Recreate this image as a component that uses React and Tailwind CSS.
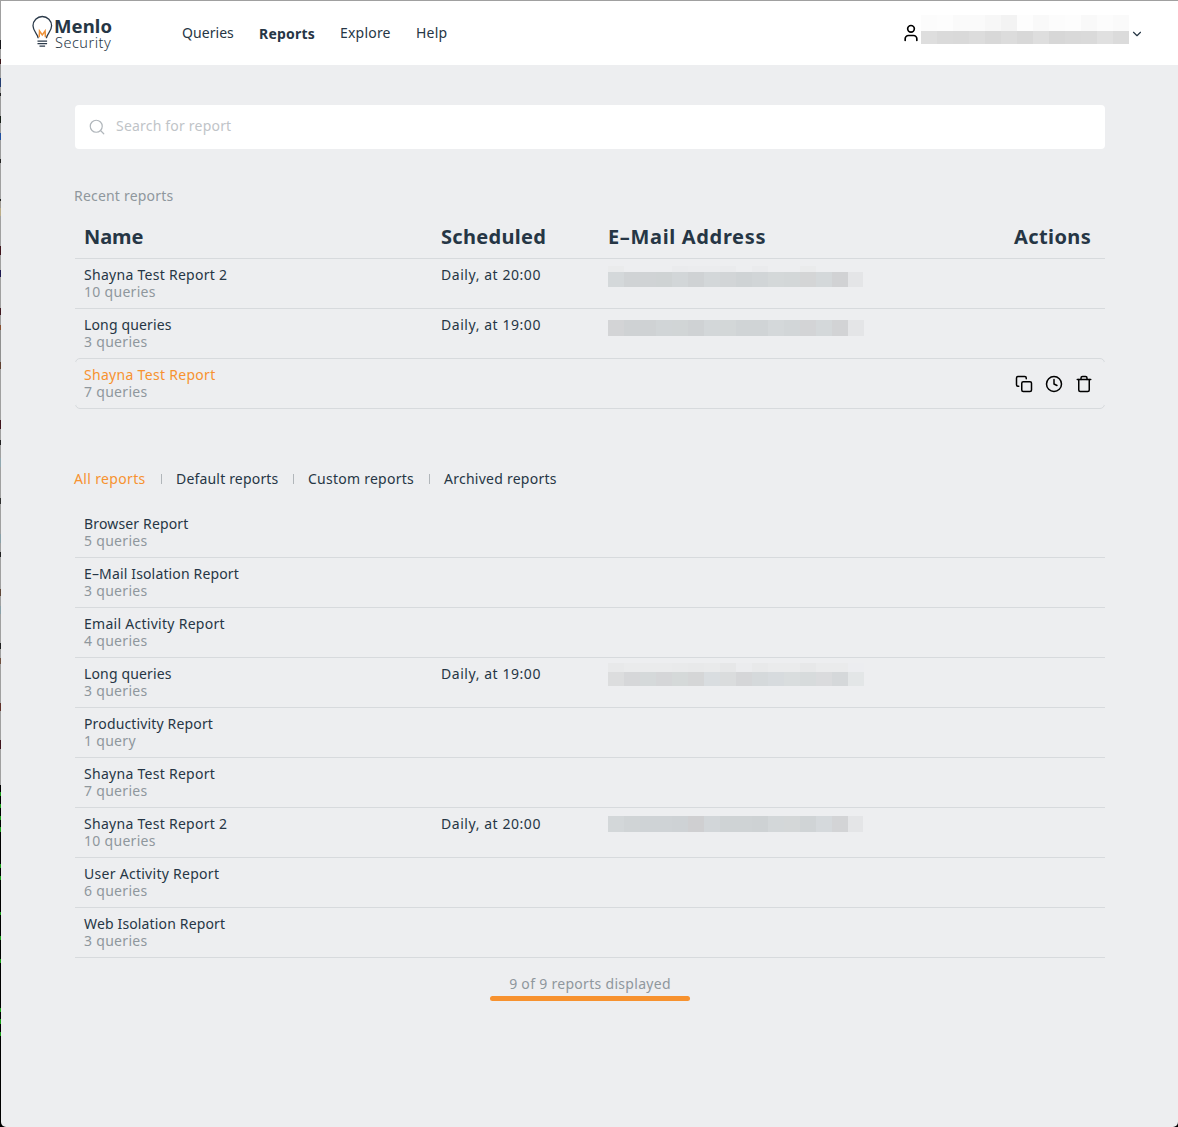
import { User, ChevronDown, Search } from "lucide-react";
import { FiCopy, FiClock, FiTrash } from "react-icons/fi";

const recent = [
  { name: "Shayna Test Report 2", count: "10 queries", time: "Daily, at 20:00", mask: "a", wide: true },
  { name: "Long queries", count: "3 queries", time: "Daily, at 19:00", mask: "b" },
];

const reports = [
  { name: "Browser Report", count: "5 queries" },
  { name: "E–Mail Isolation Report", count: "3 queries" },
  { name: "Email Activity Report", count: "4 queries", wide: true },
  { name: "Long queries", count: "3 queries", time: "Daily, at 19:00", mask: "c" },
  { name: "Productivity Report", count: "1 query" },
  { name: "Shayna Test Report", count: "7 queries", wide: true },
  { name: "Shayna Test Report 2", count: "10 queries", time: "Daily, at 20:00", mask: "d", wide: true },
  { name: "User Activity Report", count: "6 queries", wide: true },
  { name: "Web Isolation Report", count: "3 queries" },
];

const masks = {
  a: {
    pad: "w-[255px] pt-[7px]",
    top: "h-[6px]",
    body: "h-[15px]",
    light: ["#eaebec", "#edeef0", "#edeef0", "#edeef0", "#eaebed", "#ebecee", "#ebecee", "#eaebed", "#edeef0", "#eaebed", "#edeef0", "#edeef0", "#eaebec", "#edeef0", "#edeef0", "#edeef0"],
    dark: ["#d4d8da", "#d0d3d5", "#d0d3d5", "#cfd3d4", "#d2d6d8", "#cfd2d4", "#d3d7d9", "#d2d5d7", "#cfd3d5", "#d1d5d7", "#d4d8d9", "#d3d7d8", "#d4d5d6", "#d4d8da", "#d1d2d4", "#e4e5e7"],
  },
  b: {
    pad: "w-[256px] pt-[5px]",
    top: "h-[6px]",
    body: "h-4",
    light: [],
    dark: ["#d3d4d6", "#cfd2d4", "#cfd2d4", "#d1d5d7", "#d1d5d6", "#cfd2d4", "#d3d7d9", "#d3d7d8", "#d0d4d6", "#d0d4d6", "#d4d8da", "#d2d6d8", "#d3d4d6", "#d4d8da", "#d2d3d5", "#e4e5e7"],
  },
  c: {
    pad: "w-[256px] pt-[5px]",
    top: "h-[9px]",
    body: "h-[14px]",
    light: ["#e8e9ea", "#eaebec", "#eaebec", "#eaebec", "#e9eaeb", "#e8e9ea", "#e9eaeb", "#e6e7e8", "#ebecee", "#e8e9ea", "#eaebec", "#eaebec", "#e7e8e9", "#eaebec", "#eaebec", "#ecedf0"],
    dark: ["#dcddde", "#d6d7d9", "#d5d9da", "#d5d6d8", "#d5d9d9", "#d5d6d7", "#d9dde0", "#dadcdd", "#d5d6d8", "#d5d9db", "#d7dbde", "#d9ddde", "#d7dbdc", "#dadbdd", "#d5d8da", "#e3e6e7"],
  },
  d: {
    pad: "w-[255px] pt-[5px]",
    top: "h-[3px]",
    body: "h-4",
    light: [],
    dark: ["#d3d7d9", "#d0d4d6", "#cfd3d6", "#cfd3d6", "#ced2d5", "#cfcfd1", "#d2d6d9", "#cfd3d5", "#cfd3d5", "#ced2d4", "#d3d7d9", "#d4d7d8", "#d0d4d6", "#d5d9dc", "#d3d4d6", "#e4e5e7"],
  },
};

const accountLight = ["#fcfcfc", "#fdfdfd", "#fafafa", "#fafafa", "#f7f7f7", "#f3f3f3", "#fdfdfd", "#f9f9f9", "#fcfcfc", "#fdfdfd", "#f9f9f9", "#fcfcfc", "#fafafa"];
const accountDark = ["#dedede", "#dadada", "#d9d9d9", "#dcdcdc", "#d8d8d8", "#dcdcdc", "#d8d8d8", "#dedede", "#d7d7d7", "#d9d9d9", "#dadada", "#e0e0e0", "#dbdbdb"];

// [start, end, colour] bands of the window edge
const edge = [
  [0, 40, "#a0a0a0"], [40, 49, "#18181c"], [49, 59, "#a0a0a0"], [59, 64, "#3c1418"], [64, 78, "#9c9c9c"],
  [78, 87, "#223c70"], [87, 93, "#9c9c9c"], [93, 96, "#222222"], [96, 116, "#9c9c9c"], [116, 123, "#182018"],
  [123, 133, "#9c9c9c"], [133, 140, "#2050a0"], [140, 159, "#9c9c9c"], [159, 163, "#242424"], [163, 199, "#a0a0a0"],
  [199, 201, "#222222"], [201, 208, "#a09c94"], [208, 216, "#bcae88"], [216, 246, "#a0a0a0"], [246, 255, "#40141c"],
  [255, 270, "#a0a0a0"], [270, 277, "#1c1850"], [277, 308, "#a0a0a0"], [308, 315, "#401820"], [315, 325, "#a0a0a0"],
  [325, 330, "#885030"], [330, 362, "#909090"], [362, 369, "#604030"], [369, 420, "#a0a0a0"], [420, 429, "#40141c"],
  [429, 440, "#a0a0a0"], [440, 445, "#222222"], [445, 458, "#a0a0a0"], [458, 467, "#90a8b0"], [467, 498, "#a0a0a0"],
  [498, 504, "#303030"], [504, 534, "#a0a0a0"], [534, 543, "#88a0a8"], [543, 552, "#a0a0a0"], [552, 557, "#202020"],
  [557, 589, "#a0a0a0"], [589, 596, "#604838"], [596, 606, "#a0a0a0"], [606, 614, "#88a0a8"], [614, 643, "#a0a0a0"],
  [643, 649, "#202020"], [649, 658, "#a0a0a0"], [658, 664, "#705040"], [664, 703, "#a0a0a0"], [703, 711, "#603028"],
  [711, 740, "#a0a0a0"], [740, 749, "#40141c"], [749, 785, "#a0a0a0"], [785, 792, "#000000"], [792, 796, "#18a018"],
  [796, 804, "#000000"], [804, 808, "#18a018"], [808, 816, "#000000"], [816, 820, "#18a018"], [820, 827, "#000000"],
  [827, 832, "#18a018"], [832, 864, "#000000"], [864, 868, "#18a018"], [868, 876, "#000000"], [876, 880, "#18a018"],
  [880, 912, "#000000"], [912, 915, "#18a018"], [915, 936, "#000000"], [936, 940, "#18a018"], [940, 959, "#000000"],
  [959, 963, "#18a018"], [963, 1008, "#000000"], [1008, 1012, "#18a018"], [1012, 1019, "#000000"],
  [1019, 1024, "#18a018"], [1024, 1032, "#000000"], [1032, 1036, "#18a018"], [1036, 1127, "#000000"],
];

function Blocks({ colors, className }) {
  return (
    <div className={`flex overflow-hidden ${className}`}>
      {colors.map((c, i) => (
        <span key={i} className="h-full w-4 shrink-0" style={{ backgroundColor: c }} />
      ))}
    </div>
  );
}

function Mask({ kind }) {
  const m = masks[kind];
  return (
    <div className={m.pad}>
      <Blocks colors={m.light} className={m.top} />
      <Blocks colors={m.dark} className={m.body} />
    </div>
  );
}

function Row({ item, last }) {
  return (
    <div className={`grid h-[50px] grid-cols-[357px_167px_1fr] border-b pl-[9px] ${last ? "border-transparent" : "border-[#d7dadd]"}`}>
      <div className="pt-[7px]">
        <div className={item.wide ? "tracking-[0.28px]" : "tracking-[0.15px]"}>{item.name}</div>
        <Count>{item.count}</Count>
      </div>
      <div className="pt-[7px] tracking-[0.56px]">{item.time}</div>
      {item.mask && <Mask kind={item.mask} />}
    </div>
  );
}

function Count({ children }) {
  return <div className="text-[#8f979d]">{children}</div>;
}

function Logo() {
  return (
    <div className="flex w-[83px] shrink-0">
      <svg width="21" height="34" viewBox="0 0 21 34" fill="none" className="mt-[14px] shrink-0" stroke="#2c3b4b">
        <path d="M6.2 23.2C6 19.5 1 16.5 1 10.8a9.3 9.3 0 0 1 18.6 0C19.6 16.5 14.6 19.5 14.4 23.2" strokeWidth="1.3" />
        <path d="M5.500 26.200h9.600M5.500 28.700h9.600M7.500 31.200h5.600" strokeWidth="1.3" />
        <path d="M7.200 22.200l.3-6.200 2.800 3.900 2.800-3.900.3 6.200" stroke="#ee9138" strokeWidth="1.5" />
      </svg>
      <div className="ml-[1px] pt-[16px]">
        <div className="text-[18.5px] leading-[18px] font-bold tracking-[0.1px]">Menlo</div>
        <div className="pl-px text-[14.5px] leading-[15px] font-light tracking-[0.5px]">Security</div>
      </div>
    </div>
  );
}

function Divider() {
  return <span className="mt-[1px] h-[10px] w-px bg-[#b1b6ba]" />;
}

export default function App() {
  return (
    <div className="flex h-[1127px] w-[1178px] overflow-hidden bg-black font-['Noto_Sans',sans-serif] text-[14px] leading-[17px] tracking-[0.3px] whitespace-nowrap text-[#263645]">
      <div className="w-px shrink-0">
        {edge.map(([from, to, color]) => (
          <div key={from} style={{ height: to - from, backgroundColor: color }} />
        ))}
      </div>
      <div className="flex w-[1177px] flex-col overflow-hidden rounded-b-[5px] border-t border-[#a0a0a0] bg-[#edeef0]">
        <header className="flex h-[64px] shrink-0 bg-white pl-[31px]">
          <Logo />
          <nav className="flex pt-[23px] tracking-[0.2px]">
            <span className="ml-[67px] w-[77px] tracking-[0.05px]">Queries</span>
            <span className="w-[81px] pt-px font-bold">Reports</span>
            <span className="w-[76px]">Explore</span>
            <span>Help</span>
          </nav>
          <div className="mr-[34px] ml-auto flex">
            <User className="mt-[22px] text-black" size={20} strokeWidth={2} />
            <div className="mt-[14px] w-[208px]">
              <Blocks colors={accountLight} className="h-4" />
              <Blocks colors={accountDark} className="h-[13px]" />
            </div>
            <ChevronDown className="mt-[26px] ml-[1px]" size={14} strokeWidth={2} />
          </div>
        </header>

        <main className="mt-10 ml-[74px] w-[1030px]">
          <div className="flex h-11 items-center rounded-[4px] bg-white pl-[13px] text-[#bfc4c8]">
            <Search size={18} strokeWidth={1.6} className="text-[#b0b6bb]" />
            <span className="-mt-[3px] ml-[10px] tracking-[0.2px]">Search for report</span>
          </div>

          <div className="mt-[38px] -ml-px tracking-[0.2px] text-[#8f979d]">Recent reports</div>

          <div className="mt-[11px] grid h-[44px] grid-cols-[357px_167px_406px_1fr] border-b border-[#d7dadd] pt-[8px] pl-[9px] text-[20px] leading-[28px] font-bold">
            <span className="tracking-[-0.1px]">Name</span>
            <span>Scheduled</span>
            <span className="tracking-[0.66px]">E–Mail Address</span>
            <span className="tracking-[0.4px]">Actions</span>
          </div>
          {recent.map((r, i) => (
            <Row key={r.name} item={r} last={i === 1} />
          ))}
          <div className="relative -mt-px flex h-[51px] justify-between rounded-[5px] border border-[#d7dadd] pr-[11px] pl-[8px] before:absolute before:inset-y-[3px] before:-left-px before:w-px before:bg-[#edeef0] after:absolute after:inset-y-[3px] after:-right-px after:w-px after:bg-[#edeef0]">
            <div className="pt-[7px]">
              <div className="text-[#f7922f]">Shayna Test Report</div>
              <Count>7 queries</Count>
            </div>
            <div className="flex items-center gap-3 text-black">
              <FiCopy size={18} />
              <FiClock size={18} />
              <FiTrash size={18} />
            </div>
          </div>

          <div className="mt-[61px] -ml-px flex items-center tracking-[0.25px]">
            <span className="w-[87px] tracking-[0.35px] text-[#f7922f]">All reports</span>
            <Divider />
            <span className="ml-[14px] w-[117px] tracking-[0.18px]">Default reports</span>
            <Divider />
            <span className="ml-[14px] w-[121px]">Custom reports</span>
            <Divider />
            <span className="ml-[14px]">Archived reports</span>
          </div>

          <div className="mt-[21px]">
            {reports.map((r) => (
              <Row key={r.name} item={r} />
            ))}
          </div>

          <div className="mx-auto mt-[17px] flex w-[200px] flex-col items-center">
            <span className="text-[#8f979d]">9 of 9 reports displayed</span>
            <div className="mt-[4px] h-[5px] w-full rounded-full bg-[#f7922f]" />
          </div>
        </main>
      </div>
    </div>
  );
}
